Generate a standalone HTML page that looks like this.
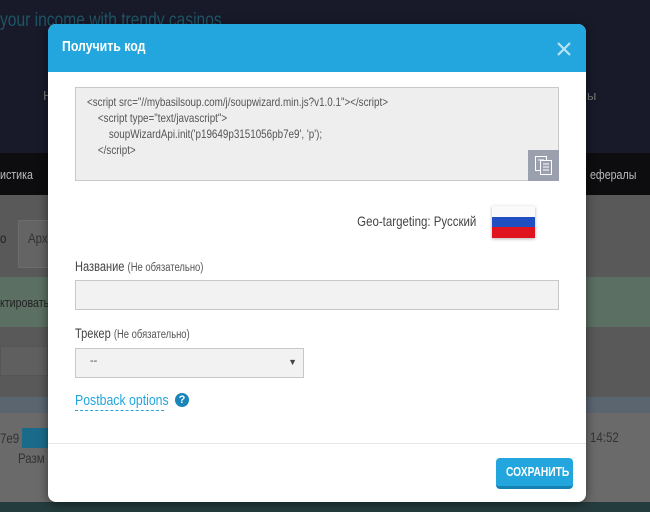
<!DOCTYPE html>
<html><head><meta charset="utf-8"><style>
*{margin:0;padding:0;box-sizing:border-box}
body{width:650px;height:512px;overflow:hidden;position:relative;background:#595959;font-family:"Liberation Sans",sans-serif}
.abs{position:absolute}
.c{display:inline-block;transform:scaleX(.82);transform-origin:0 0;white-space:nowrap}
.cr{display:inline-block;transform:scaleX(.82);transform-origin:100% 0;white-space:nowrap}
.modal{left:48px;top:24px;width:538px;height:478px;background:#fff;border-radius:8px;overflow:hidden;box-shadow:0 2px 10px rgba(0,0,0,.5)}
.hd{height:48px;background:#22a6dd;color:#fff;font-weight:bold;font-size:15px;padding:14px 0 0 14px}
.code{left:27px;top:63px;width:484px;height:94px;background:#eee;border:1px solid #c8c8c8;font-size:12px;color:#555;line-height:16px;padding:6px 0 0 11px}
.code .c{white-space:pre}
.lbl{font-size:13.5px;color:#444}
.lbl small{font-size:11.5px;color:#555}
.inp{background:#f2f2f2;border:1px solid #c8c8c8}
</style></head><body>
<div class="abs" style="left:0;top:0;width:650px;height:153px;background:#181a2a"></div>
<div class="abs" style="left:0;top:10px;color:#1f5566;font-size:19px"><span class="c">your income with trendy casinos</span></div>
<div class="abs" style="left:43px;top:88px;color:#777;font-size:13px">Н</div>
<div class="abs" style="left:587px;top:88px;color:#777;font-size:13px">ы</div>
<div class="abs" style="left:0;top:153px;width:650px;height:42px;background:#0d0d10"></div>
<div class="abs" style="left:0;top:167px;color:#bbb;font-size:13px"><span class="c">истика</span></div>
<div class="abs" style="left:590px;top:167px;color:#bbb;font-size:13px"><span class="c">ефералы</span></div>
<div class="abs" style="left:18px;top:220px;width:40px;height:48px;background:#646464;border:1px solid #6c6c6c"></div>
<div class="abs" style="left:0;top:230px;color:#222;font-size:14px"><span class="c">о</span></div>
<div class="abs" style="left:28px;top:230px;color:#333;font-size:14px"><span class="c">Арх</span></div>
<div class="abs" style="left:0;top:277px;width:650px;height:50px;background:#5c6f63"></div>
<div class="abs" style="left:0;top:295px;color:#222;font-size:13px"><span class="c">ктировать</span></div>
<div class="abs" style="left:0;top:346px;width:48px;height:30px;background:#5f5f5f;border:1px solid #555"></div>
<div class="abs" style="left:0;top:397px;width:650px;height:16px;background:#5a6570"></div>
<div class="abs" style="left:0;top:413px;width:650px;height:89px;background:#6a6a6a"></div>
<div class="abs" style="left:0;top:430px;color:#333;font-size:14px"><span class="c">7e9</span></div>
<div class="abs" style="left:22px;top:428px;width:26px;height:20px;background:#1a6b8a"></div>
<div class="abs" style="left:18px;top:450px;color:#333;font-size:14px"><span class="c">Разм</span></div>
<div class="abs" style="left:590px;top:429px;color:#333;font-size:14px"><span class="c">14:52</span></div>
<div class="abs" style="left:0;top:502px;width:650px;height:10px;background:#243c3e"></div>
<div class="abs modal">
<div class="hd"><span class="c">Получить код</span></div>
<svg class="abs" style="left:509px;top:18px" width="14" height="14"><path d="M1 1L13 13M13 1L1 13" stroke="#b9e3f5" stroke-width="2.2"/></svg>
<div class="abs code"><span class="c">&lt;script src="//mybasilsoup.com/j/soupwizard.min.js?v1.0.1"&gt;&lt;/script&gt;
    &lt;script type="text/javascript"&gt;
        soupWizardApi.init('p19649p3151056pb7e9', 'p');
    &lt;/script&gt;</span></div>
<div class="abs" style="left:480px;top:126px;width:31px;height:31px;background:#9aa0ad"></div>
<svg class="abs" style="left:486px;top:131px" width="19" height="21" fill="none" stroke="#fff" stroke-width="1"><rect x="1.5" y="1.5" width="11" height="14"/><rect x="6.5" y="5.5" width="11" height="14" fill="#9aa0ad"/><path d="M9 9h6M9 12h6M9 15h6M4 5h6"/></svg>
<div class="abs" style="right:110px;top:189px;font-size:14px;color:#444"><span class="cr">Geo-targeting: Русский</span></div>
<div class="abs" style="left:444px;top:182px;width:43px;height:32px;box-shadow:0 1px 3px rgba(0,0,0,.3)">
<div style="height:11px;background:#fafafa"></div><div style="height:10px;background:#1f4fc0"></div><div style="height:11px;background:#e0141e"></div></div>
<div class="abs lbl" style="left:27px;top:235px"><span class="c">Название <small>(Не обязательно)</small></span></div>
<div class="abs inp" style="left:27px;top:256px;width:484px;height:30px"></div>
<div class="abs lbl" style="left:27px;top:302px"><span class="c">Трекер <small>(Не обязательно)</small></span></div>
<div class="abs inp" style="left:27px;top:324px;width:229px;height:30px;font-size:11px;color:#444;padding:6px 0 0 14px">--<span style="position:absolute;right:6px;top:8px;font-size:9px">▼</span></div>
<div class="abs" style="left:27px;top:368px;width:89px;height:19px;border-bottom:1px dashed #22a6dd;font-size:15px;color:#22a6dd;line-height:17px"><span class="c">Postback options</span></div>
<div class="abs" style="left:127px;top:369px;width:14px;height:14px;border-radius:50%;background:#1a85b8;color:#fff;font-size:11px;font-weight:bold;text-align:center;line-height:14px">?</div>
<div class="abs" style="left:0;top:419px;width:538px;height:1px;background:#e6e6e6"></div>
<div class="abs" style="left:448px;top:434px;width:77px;height:31px;background:#22a6dd;border-radius:4px;border-bottom:3px solid #1482b3;color:#fff;font-weight:bold;font-size:12.5px;line-height:28px;padding-left:10px"><span class="c">СОХРАНИТЬ</span></div>
</div>
</body></html>
